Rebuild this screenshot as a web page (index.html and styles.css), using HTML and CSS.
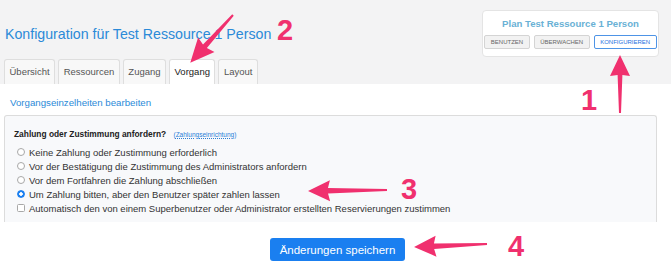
FILE: index.html
```html
<!DOCTYPE html>
<html lang="de">
<head>
<meta charset="UTF-8" />
<title>Konfiguration – Vorgang</title>
<link rel="stylesheet" href="styles.css">
</head>
<body>
<div class="page">
  <header class="top">
    <div class="top-left">
      <h1 class="title">Konfiguration für Test Ressource 1 Person</h1>
      <nav class="tabs">
        <a class="tab">Übersicht</a>
        <a class="tab">Ressourcen</a>
        <a class="tab">Zugang</a>
        <a class="tab active">Vorgang</a>
        <a class="tab">Layout</a>
      </nav>
    </div>
    <aside class="plan">
      <div class="plan-name">Plan Test Ressource 1 Person</div>
      <div class="plan-actions">
        <span class="plan-btn">Benutzen</span>
        <span class="plan-btn">Überwachen</span>
        <span class="plan-btn current">Konfigurieren</span>
      </div>
    </aside>
  </header>

  <main class="content">
    <a class="section-link">Vorgangseinzelheiten bearbeiten</a>
    <section class="box">
      <div class="box-head">
        <strong>Zahlung oder Zustimmung anfordern?</strong>
        <a class="small-link">(<u>Zahlungseinrichtung</u>)</a>
      </div>
      <ul class="options">
        <li><span class="radio"></span>Keine Zahlung oder Zustimmung erforderlich</li>
        <li><span class="radio"></span>Vor der Bestätigung die Zustimmung des Administrators anfordern</li>
        <li><span class="radio"></span>Vor dem Fortfahren die Zahlung abschließen</li>
        <li><span class="radio checked"></span>Um Zahlung bitten, aber den Benutzer später zahlen lassen</li>
        <li><span class="check"></span>Automatisch den von einem Superbenutzer oder Administrator erstellten Reservierungen zustimmen</li>
      </ul>
    </section>
    <div class="actions">
      <button class="save" type="button">Änderungen speichern</button>
    </div>
  </main>

  <!-- annotation arrows and step numbers drawn over the screenshot -->
  <svg class="marks" width="671" height="280" viewBox="0 0 671 280">
    <g fill="#f0306e">
      <polygon transform="translate(233,15) rotate(131.9)" points="0,-1 42,-2.6 40,-11 64,0 40,11 42,2.6 0,1" />
      <polygon transform="translate(620,113) rotate(-90)" points="0,-1 38,-2.4 37,-10 58,0 37,10 38,2.4 0,1" />
      <polygon transform="translate(387,190) rotate(179.3)" points="0,-1 59,-2.8 57,-10.5 79,0 57,10.5 59,2.8 0,1" />
      <polygon transform="translate(487,244) rotate(177.6)" points="0,-1 53,-2.8 51,-10.5 73,0 51,10.5 53,2.8 0,1" />
      <text class="num" x="277" y="40">2</text>
      <text class="num" x="581" y="110">1</text>
      <text class="num" x="401" y="199">3</text>
      <text class="num" x="508" y="256">4</text>
    </g>
  </svg>
</div>
</body>
</html>
```

FILE: styles.css
```css
/* Reset and base */
* {
  box-sizing: border-box;
  margin: 0;
  padding: 0;
}
body {
  font-family: 'Liberation Sans', Arial, Helvetica, sans-serif;
  background: #fff;
  color: #333;
}
.page {
  position: relative;
  width: 671px;
  height: 280px;
  overflow: hidden;
}

/* Header with title, tabs and plan box */
.top {
  display: flex;
  justify-content: space-between;
  height: 84px;
  background: #f3f3f4;
}
.top-left {
  display: flex;
  flex-direction: column;
  padding-left: 4px;
}
.title {
  padding: 24px 0 0 1px;
  font-size: 14.2px;
  line-height: 20px;
  font-weight: 400;
  color: #2b8ad8;
}
.tabs {
  display: flex;
  gap: 3px;
  margin-top: 15px;
}
.tab {
  height: 25px;
  padding: 0 4.5px;
  border: 1px solid #dedede;
  border-bottom: none;
  border-radius: 3px 3px 0 0;
  background: #f8f8f8;
  font-size: 9.5px;
  line-height: 24px;
  color: #555;
}
.tab.active {
  background: #fff;
  color: #222;
}
.plan {
  width: 177px;
  height: 47px;
  margin: 10px 12px 0 0;
  padding-top: 6px;
  background: #fff;
  border: 1px solid #e4e4e4;
  border-radius: 4px;
  text-align: center;
}
.plan-name {
  font-size: 9.6px;
  line-height: 13px;
  font-weight: 700;
  color: #69b1d5;
}
.plan-actions {
  display: flex;
  justify-content: center;
  gap: 4px;
  margin-top: 5px;
}
.plan-btn {
  height: 14px;
  padding: 0 5.5px;
  border: 1px solid #d4d4d4;
  border-radius: 2px;
  background: #f2f2f2;
  font-size: 6px;
  line-height: 12px;
  text-transform: uppercase;
  color: #666;
}
.plan-btn.current {
  background: #fff;
  border-color: #4e94e6;
  color: #1a6fe0;
}

/* Main content */
.content {
  display: flex;
  flex-direction: column;
  padding: 13px 14px 0 4px;
}
.section-link {
  margin-left: 6px;
  font-size: 9.7px;
  line-height: 12px;
  color: #2b8ad8;
}
.box {
  height: 107px;
  margin-top: 6px;
  padding: 12px 9px 8px;
  background: #f8f9fb;
  border: 1px solid #dcdcdc;
  border-bottom: none;
  border-radius: 3px 3px 0 0;
}
.box-head {
  font-size: 8.4px;
  line-height: 12px;
  color: #222;
}
.small-link {
  margin-left: 5px;
  font-size: 6.5px;
  color: #2b7fd8;
}
.small-link u {
  text-decoration-style: dotted;
}
.options {
  list-style: none;
  margin-top: 4px;
}
.options li {
  display: flex;
  align-items: center;
  height: 14px;
  font-size: 9.5px;
  color: #333;
}
.radio,
.check {
  flex: none;
  width: 8px;
  height: 8px;
  margin: 0 4px 0 3px;
  border: 1px solid #a8a8a8;
  background: #fff;
}
.radio {
  border-radius: 50%;
}
.check {
  border-radius: 1.5px;
}
.radio.checked {
  border-color: #1a7ff0;
  background: radial-gradient(circle, #fff 0 1.5px, #1a7ff0 2px);
}
.actions {
  display: flex;
  justify-content: center;
  padding-left: 14px;
  margin-top: 16px;
}
.save {
  height: 23px;
  width: 135px;
  border: none;
  border-radius: 3px;
  background: #1a7ff0;
  color: #fff;
  font-family: inherit;
  font-size: 11.5px;
}

/* Annotation overlay */
.marks {
  position: absolute;
  top: 0;
  left: 0;
  pointer-events: none;
}
.num {
  font-family: 'Liberation Sans', Arial, sans-serif;
  font-weight: 700;
  font-size: 29px;
}
```
